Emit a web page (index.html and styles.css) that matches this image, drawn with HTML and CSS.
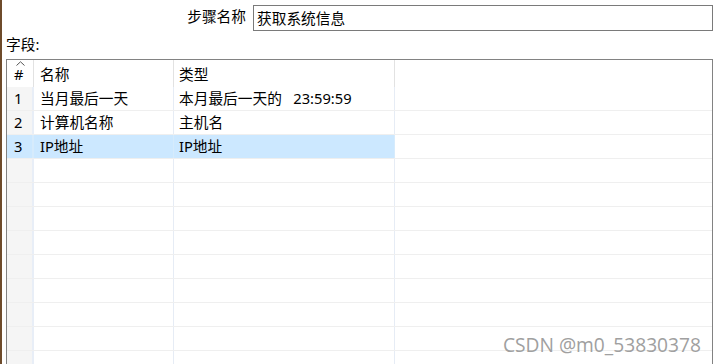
FILE: index.html
```html
<!DOCTYPE html>
<html lang="zh">
<head>
<meta charset="utf-8">
<link rel="stylesheet" href="styles.css">
</head>
<body>
<div class="page">
  <div class="step-row">
    <span class="step-label">步骤名称</span>
    <div class="step-input">获取系统信息</div>
  </div>
  <div class="fields-label">字段:</div>
  <div class="grid">
    <div class="row head">
      <div class="cell num"><svg class="sort" width="9" height="5" viewBox="0 0 9 5"><polyline points="0.5,4.5 4.5,0.8 8.5,4.5" fill="none" stroke="#555" stroke-width="1"/></svg>#</div>
      <div class="cell name">名称</div>
      <div class="cell type">类型</div>
      <div class="cell fill"></div>
    </div>
    <div class="row">
      <div class="cell num">1</div>
      <div class="cell name">当月最后一天</div>
      <div class="cell type">本月最后一天的&nbsp;&nbsp; 23:59:59</div>
      <div class="cell fill"></div>
    </div>
    <div class="row">
      <div class="cell num">2</div>
      <div class="cell name">计算机名称</div>
      <div class="cell type">主机名</div>
      <div class="cell fill"></div>
    </div>
    <div class="row selected">
      <div class="cell num">3</div>
      <div class="cell name">IP地址</div>
      <div class="cell type">IP地址</div>
      <div class="cell fill"></div>
    </div>
    <div class="row"><div class="cell num"></div><div class="cell name"></div><div class="cell type"></div><div class="cell fill"></div></div>
    <div class="row"><div class="cell num"></div><div class="cell name"></div><div class="cell type"></div><div class="cell fill"></div></div>
    <div class="row"><div class="cell num"></div><div class="cell name"></div><div class="cell type"></div><div class="cell fill"></div></div>
    <div class="row"><div class="cell num"></div><div class="cell name"></div><div class="cell type"></div><div class="cell fill"></div></div>
    <div class="row"><div class="cell num"></div><div class="cell name"></div><div class="cell type"></div><div class="cell fill"></div></div>
    <div class="row"><div class="cell num"></div><div class="cell name"></div><div class="cell type"></div><div class="cell fill"></div></div>
    <div class="row"><div class="cell num"></div><div class="cell name"></div><div class="cell type"></div><div class="cell fill"></div></div>
    <div class="row"><div class="cell num"></div><div class="cell name"></div><div class="cell type"></div><div class="cell fill"></div></div>
    <div class="row"><div class="cell num"></div><div class="cell name"></div><div class="cell type"></div><div class="cell fill"></div></div>
  </div>
  <div class="watermark">CSDN @m0_53830378</div>
</div>
</body>
</html>
```
FILE: styles.css
```css
html, body {
  margin: 0;
  padding: 0;
  background: #fff;
  overflow: hidden;
}
.page {
  position: relative;
  width: 715px;
  height: 364px;
  box-sizing: border-box;
  border-left: 2px solid #6e4b2b;
  padding: 5px 2px 0 4px;
  font-family: "Noto Sans", "Noto Sans CJK SC", sans-serif;
  font-size: 14.7px;
  color: #000;
  overflow: hidden;
}
.step-row {
  display: flex;
  justify-content: flex-end;
  align-items: flex-start;
  height: 26px;
}
.step-label {
  line-height: 22px;
  margin-right: 7px;
}
.step-input {
  height: 24px;
  border: 1px solid #7a7a7a;
  line-height: 24px;
  padding-left: 3px;
  width: 455px;
}
.fields-label {
  height: 28px;
  line-height: 26px;
}
.grid {
  border: 1px solid #828282;
  border-bottom: none;
  display: flex;
  flex-direction: column;
}
.row {
  display: flex;
  height: 23px;
  border-bottom: 1px solid #efefef;
}
.row.head {
  height: 27px;
  border-bottom: none;
}
.cell {
  box-sizing: border-box;
  line-height: 23px;
  white-space: nowrap;
  border-right: 1px solid #e6ecf5;
}
.head .cell {
  line-height: 27px;
  padding-top: 1px;
  border-right: 1px solid #e2e2e2;
}
.num {
  width: 27px;
  padding-left: 7px;
  background: #f5f5f5;
  position: relative;
  border-right: 2px solid #e8eef7;
}
.head .num {
  background: #fff;
}
.sort {
  position: absolute;
  left: 9px;
  top: 1px;
}
.name {
  width: 140px;
  padding-left: 6px;
}
.type {
  width: 221px;
  padding-left: 5px;
}
.fill {
  flex: 1;
  border-right: none;
}
.head .fill {
  border-right: none;
}
.selected .num,
.selected .name,
.selected .type {
  background: #cce8ff;
  border-right-color: #d6ebfc;
}
.watermark {
  position: absolute;
  right: 14px;
  bottom: 8px;
  font-family: "Open Sans", sans-serif;
  font-size: 19.2px;
  color: #a0a0a0;
  line-height: 22px;
}
```
